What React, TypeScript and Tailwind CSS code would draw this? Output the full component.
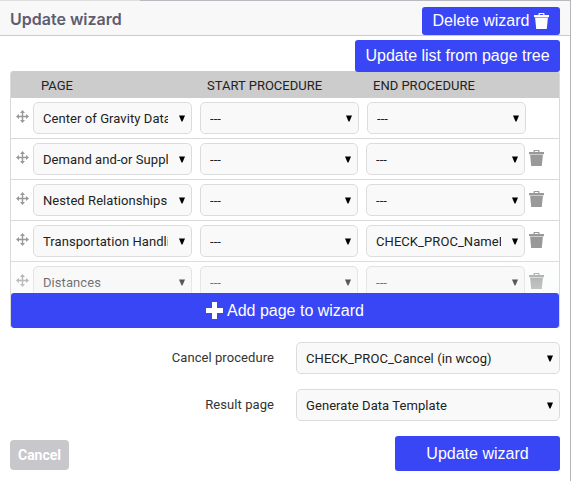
import React from "react";

function Trash({ className }: { className: string }) {
  return (
    <svg className={className} viewBox="0 0 15 16" fill="currentColor">
      <path d="M4.5 2V.8Q4.5 0 5.3 0H9.7Q10.5 0 10.5.8V2H15V4.2H0V2ZM5.8 2H9.2V1.1H5.8ZM1.1 4.7H13.9L12.8 16H2.2Z" />
    </svg>
  );
}

function Move() {
  return (
    <svg className="mt-2 h-[13px] w-[13px] shrink-0 text-[#999]" viewBox="0 0 13 13" fill="currentColor">
      <path d="M6.5 0 9 3H7.2V5.8H10V4L13 6.5 10 9V7.2H7.2V10H9L6.5 13 4 10H5.8V7.2H3V9L0 6.5 3 4V5.8H5.8V3H4Z" />
    </svg>
  );
}

function Select({ text, className }: { text: string; className: string }) {
  return (
    <div
      className={`flex h-8 shrink-0 items-center rounded-[5px] border border-[#dcdcdc] bg-[#f9f9f9] pl-[9px] pr-[6px] text-[13px] tracking-[0.07px] text-[#222] ${className}`}
    >
      <span className="min-w-0 flex-1 overflow-hidden whitespace-nowrap pt-[2px] leading-4">{text}</span>
      <svg className="ml-[11px] h-[7px] w-[6px] shrink-0" viewBox="0 0 6 7">
        <path d="M0 0.5H6L3.5 6.5H2.5Z" fill="#000" />
      </svg>
    </div>
  );
}

const rows = [
  { page: "Center of Gravity Data", end: "---", first: true },
  { page: "Demand and-or Supply", end: "---", first: false },
  { page: "Nested Relationships", end: "---", first: false },
  { page: "Transportation Handling", end: "CHECK_PROC_NameEntry", first: false },
  { page: "Distances", end: "---", first: false },
];

const blueButton =
  "flex shrink-0 items-center justify-center rounded-[3px] bg-[#3846f5] font-['Liberation_Sans',Arial,sans-serif] text-[16px] text-white whitespace-nowrap";

export default function App() {
  return (
    <div className="h-[481px] w-[571px] overflow-hidden border-r border-[#b5b5b9] bg-white font-[Roboto,sans-serif]">
      <div className="flex h-px">
        <div className="w-[140px] bg-[#dedee0]" />
        <div className="flex-1 bg-[#b9b9c0]" />
      </div>
      <header className="flex h-[35px] justify-between border-b border-[#ccc] bg-[#f8f8f8] pl-[10px] pr-[10px]">
        <h1 className="pt-[8px] font-[Inter,sans-serif] text-[16px] font-semibold leading-5 text-[#5d5d70]">
          Update wizard
        </h1>
        <button className={`${blueButton} mt-[6px] h-7 w-[138px] gap-[5px]`}>
          <span>Delete wizard</span>
          <Trash className="h-4 w-[15px]" />
        </button>
      </header>
      <main className="px-[10px] pt-1">
        <div className="flex h-[31px] justify-end">
          <button className={`${blueButton} relative z-10 h-8 w-[205px]`}>Update list from page tree</button>
        </div>
        <section className="h-[257px] w-[550px] overflow-hidden rounded-[3px] border-x border-[#dadada]">
          <div className="flex h-[27px] items-center bg-[#ccc] pl-[30px] pt-[2px] text-[13px] text-[#222]">
            <span className="w-[166px]">PAGE</span>
            <span className="w-[166px]">START PROCEDURE</span>
            <span>END PROCEDURE</span>
          </div>
          <div className="relative h-[195px] overflow-hidden">
            {rows.map((row) => (
              <div key={row.page} className="flex h-[41px] border-b border-[#d9d9d9] pl-[5px] pt-1">
                <Move />
                <Select text={row.page} className="ml-1 w-[159px]" />
                <Select text="---" className={row.first ? "ml-2 w-[159px]" : "ml-2 w-[158px]"} />
                <Select text={row.end} className="ml-2 w-[159px]" />
                {!row.first && <Trash className="ml-1 mt-[7px] h-4 w-[15px] shrink-0 text-[#999]" />}
              </div>
            ))}
            <div className="pointer-events-none absolute inset-x-0 bottom-0 h-[40px] bg-linear-to-b from-[#f6f7f9]/0 to-[#f6f7f9]/50" />
          </div>
          <button className={`${blueButton} h-[35px] w-full gap-1`}>
            <svg className="h-[17px] w-[17px]" viewBox="0 0 17 17" fill="currentColor">
              <path d="M6 0H11V6H17V11H11V17H6V11H0V6H6Z" />
            </svg>
            <span>Add page to wizard</span>
          </button>
        </section>
        <div className="mt-[14px] flex justify-end gap-[22px] text-[13px] tracking-[0.07px] text-[#333]">
          <label className="pt-2 leading-4">Cancel procedure</label>
          <Select text="CHECK_PROC_Cancel (in wcog)" className="w-[264px]" />
        </div>
        <div className="mt-[15px] flex justify-end gap-[22px] text-[13px] tracking-[0.07px] text-[#333]">
          <label className="pt-2 leading-4">Result page</label>
          <Select text="Generate Data Template" className="w-[264px]" />
        </div>
        <footer className="mt-[15px] flex justify-between">
          <button className="mt-1 h-[30px] w-[59px] rounded-[4px] bg-[#c7c7cc] text-[14px] font-bold text-white">
            Cancel
          </button>
          <button className={`${blueButton} h-[35px] w-[165px]`}>Update wizard</button>
        </footer>
      </main>
    </div>
  );
}
